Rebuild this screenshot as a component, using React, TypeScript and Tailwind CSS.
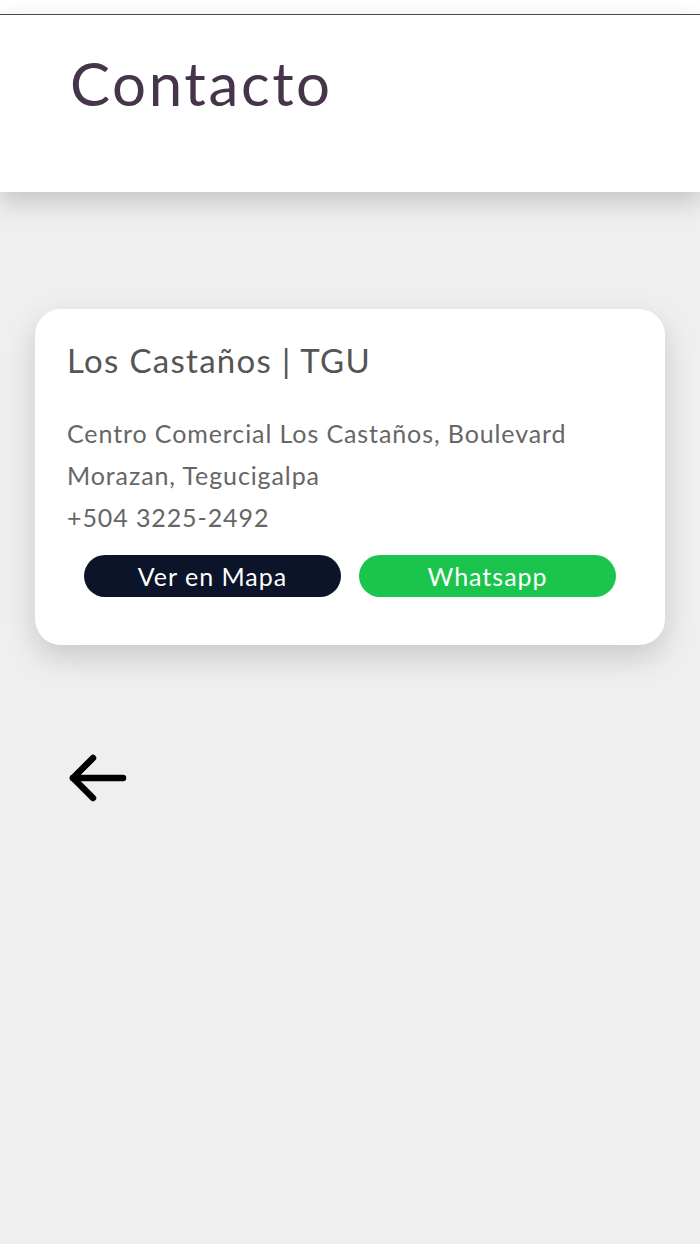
import React from "react";

export default function App() {
  const font = { fontFamily: "Lato, 'Noto Sans', sans-serif" };
  return (
    <div className="w-[700px] h-[1244px] bg-[#efefef] overflow-hidden" style={font}>
      <div className="h-[14px] bg-white" />
      <div className="h-[178px] bg-white border-t border-[#4a4a4a] shadow-[0_10px_24px_rgba(0,0,0,0.18)] relative z-10 pl-[70px] pt-[28px]">
        <h1 className="text-[60px] leading-[80px] text-[#45344a] tracking-[2.6px]">Contacto</h1>
      </div>
      <div className="px-[35px] pt-[117px]">
        <div className="bg-white rounded-[26px] shadow-[0_12px_30px_rgba(0,0,0,0.16)] h-[336px] pl-[32px] pr-[30px] pt-[33px]">
          <h2 className="text-[33px] leading-[36px] text-[#555555] tracking-[1.3px]">Los Castaños | TGU</h2>
          <div className="mt-[34px] text-[25px] leading-[42px] text-[#666666] tracking-[0.9px]">
            <p>Centro Comercial Los Castaños, Boulevard<br />Morazan, Tegucigalpa</p>
            <p>+504 3225-2492</p>
          </div>
          <div className="flex gap-[18px] mt-[17px] pl-[17px]">
            <button className="w-[257px] h-[42px] rounded-full bg-[#0b1429] text-white text-[25px] tracking-[1px] leading-[42px]">Ver en Mapa</button>
            <button className="w-[257px] h-[42px] rounded-full bg-[#1bc44c] text-white text-[25px] tracking-[1px] leading-[42px]">Whatsapp</button>
          </div>
        </div>
      </div>
      <div className="pl-[68px] pt-[108px]">
        <svg width="60" height="52" viewBox="0 0 60 52" fill="none" stroke="#000" strokeWidth="6.5" strokeLinecap="round" strokeLinejoin="round">
          <path d="M25 5 L5 25 L25 45" />
          <path d="M5 25 H55" />
        </svg>
      </div>
    </div>
  );
}
